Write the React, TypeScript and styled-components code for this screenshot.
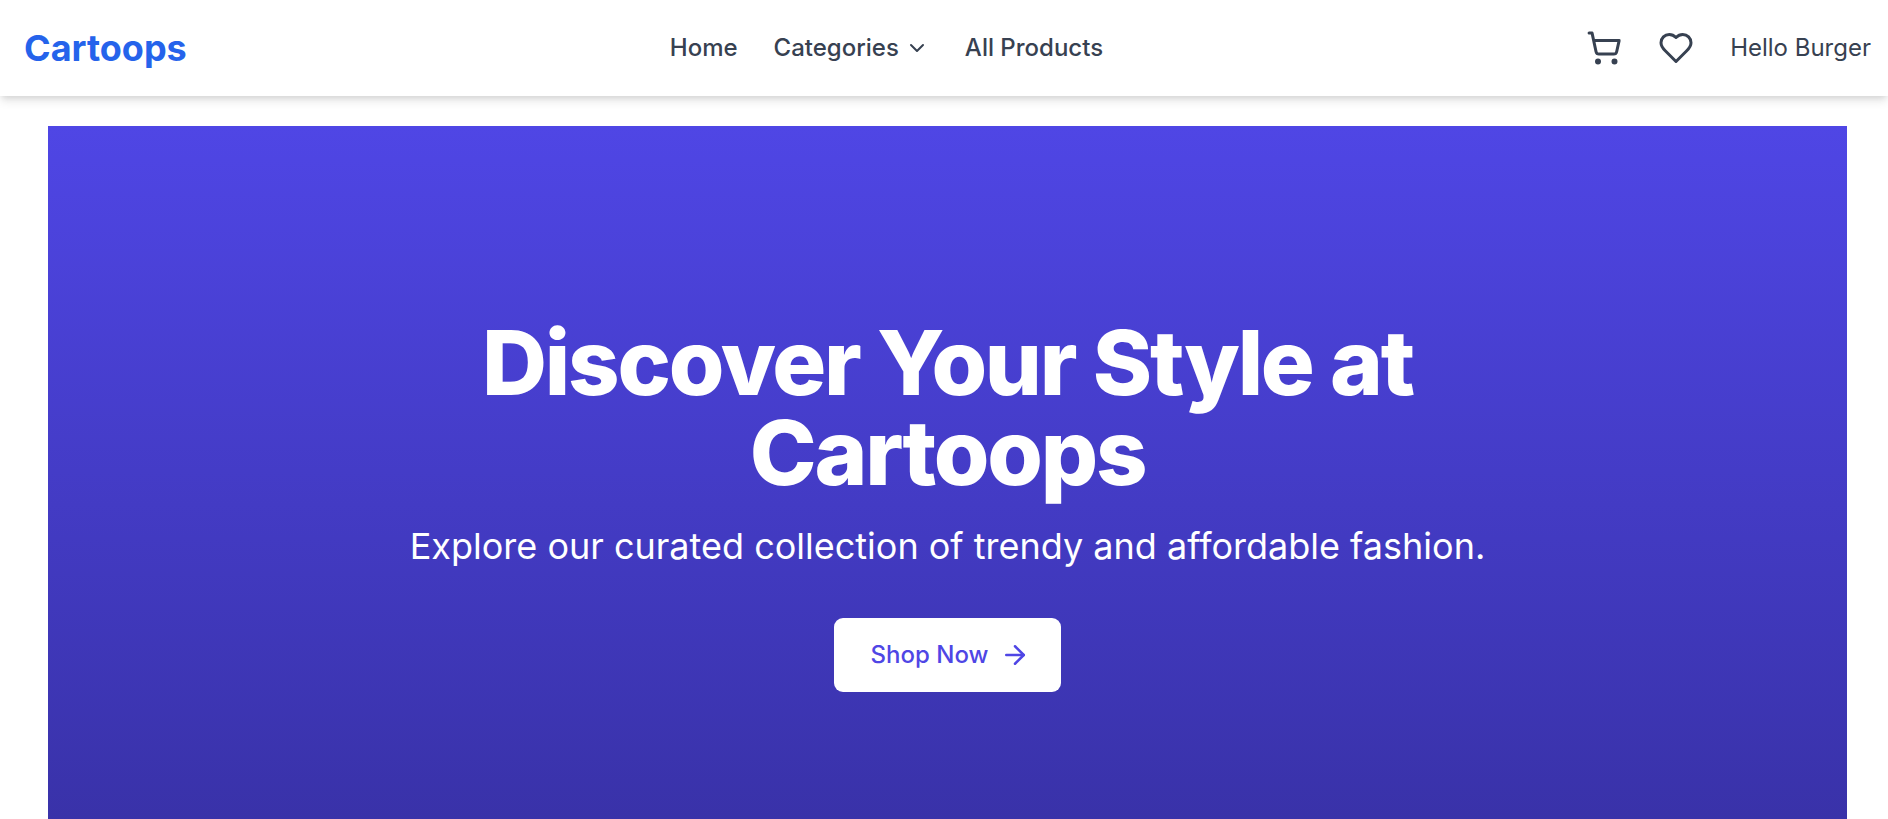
import React from "react";
import styled, { createGlobalStyle } from "styled-components";
import { ArrowRight, ChevronDown, ShoppingCart } from "lucide-react";

const GlobalStyle = createGlobalStyle`
  *, *::before, *::after { box-sizing: border-box; }
  body {
    margin: 0;
    background: #ffffff;
    color: #374151;
    font-family: Inter, "Liberation Sans", sans-serif;
    font-size: 24px;
    line-height: 36px;
  }
  h1, p { margin: 0; }
  svg { display: block; flex-shrink: 0; }
`;

const Header = styled.header`
  display: flex;
  align-items: center;
  justify-content: space-between;
  height: 96px;
  padding: 0 17px 0 24px;
  background: #ffffff;
  box-shadow: 0 6px 9px -1px rgba(0, 0, 0, 0.1), 0 3px 6px -2px rgba(0, 0, 0, 0.1);
`;

const Brand = styled.a`
  color: #2563eb;
  font-size: 36px;
  font-weight: 700;
  line-height: 48px;
  text-decoration: none;
`;

const Group = styled.div`
  display: flex;
  align-items: center;
  gap: 36px;
`;

const Nav = styled(Group).attrs({ as: "nav" })``;

const NavLink = styled.a<{ $weight?: number }>`
  color: #374151;
  font-weight: ${({ $weight = 500 }) => $weight};
  text-decoration: none;
`;

const PlainButton = styled.button`
  display: flex;
  align-items: center;
  gap: 6px;
  padding: 0;
  border: 0;
  background: none;
  color: #374151;
  font: inherit;
  font-weight: 500;
  cursor: pointer;
`;

const Main = styled.main`
  padding: 30px 41px 48px 48px;
`;

const Hero = styled.section`
  display: flex;
  flex-direction: column;
  align-items: center;
  padding: 192px 48px;
  background: linear-gradient(to bottom, #4f46e5, #3730a3);
  color: #ffffff;
  text-align: center;
`;

const Title = styled.h1`
  max-width: 1152px;
  font-size: 90px;
  font-weight: 800;
  line-height: 90px;
  letter-spacing: -0.025em;
`;

const Subtitle = styled.p`
  margin-top: 24px;
  font-size: 36px;
  line-height: 48px;
`;

const ShopLink = styled.a`
  display: inline-flex;
  align-items: center;
  gap: 12px;
  margin-top: 48px;
  padding: 18px 30px 18px 36px;
  border: 1px solid transparent;
  border-radius: 9px;
  background: #ffffff;
  color: #4f46e5;
  font-weight: 500;
  text-decoration: none;
`;

const HeartIcon = () => (
  <svg
    width="36"
    height="36"
    viewBox="0 0 24 24"
    fill="none"
    stroke="currentColor"
    strokeWidth="2"
    strokeLinecap="round"
    strokeLinejoin="round"
    aria-hidden="true"
  >
    <path d="M19 14c1.49-1.46 3-3.21 3-5.5A5.5 5.5 0 0 0 16.5 3c-1.76 0-3 .5-4.5 2-1.5-1.5-2.74-2-4.5-2A5.5 5.5 0 0 0 2 8.5c0 2.3 1.5 4.05 3 5.5l7 7Z" />
  </svg>
);

export default function App() {
  return (
    <>
      <GlobalStyle />
      <Header>
        <Brand href="#">Cartoops</Brand>
        <Nav>
          <NavLink href="#">Home</NavLink>
          <PlainButton type="button" aria-haspopup="menu">
            Categories
            <ChevronDown size={24} aria-hidden="true" />
          </PlainButton>
          <NavLink href="#products">All Products</NavLink>
        </Nav>
        <Group>
          <PlainButton type="button" aria-label="Cart">
            <ShoppingCart size={36} />
          </PlainButton>
          <PlainButton type="button" aria-label="Wishlist">
            <HeartIcon />
          </PlainButton>
          <NavLink href="#account" $weight={400}>Hello Burger</NavLink>
        </Group>
      </Header>
      <Main>
        <Hero>
          <Title>Discover Your Style at Cartoops</Title>
          <Subtitle>Explore our curated collection of trendy and affordable fashion.</Subtitle>
          <ShopLink href="#products">
            Shop Now
            <ArrowRight size={30} aria-hidden="true" />
          </ShopLink>
        </Hero>
      </Main>
    </>
  );
}
